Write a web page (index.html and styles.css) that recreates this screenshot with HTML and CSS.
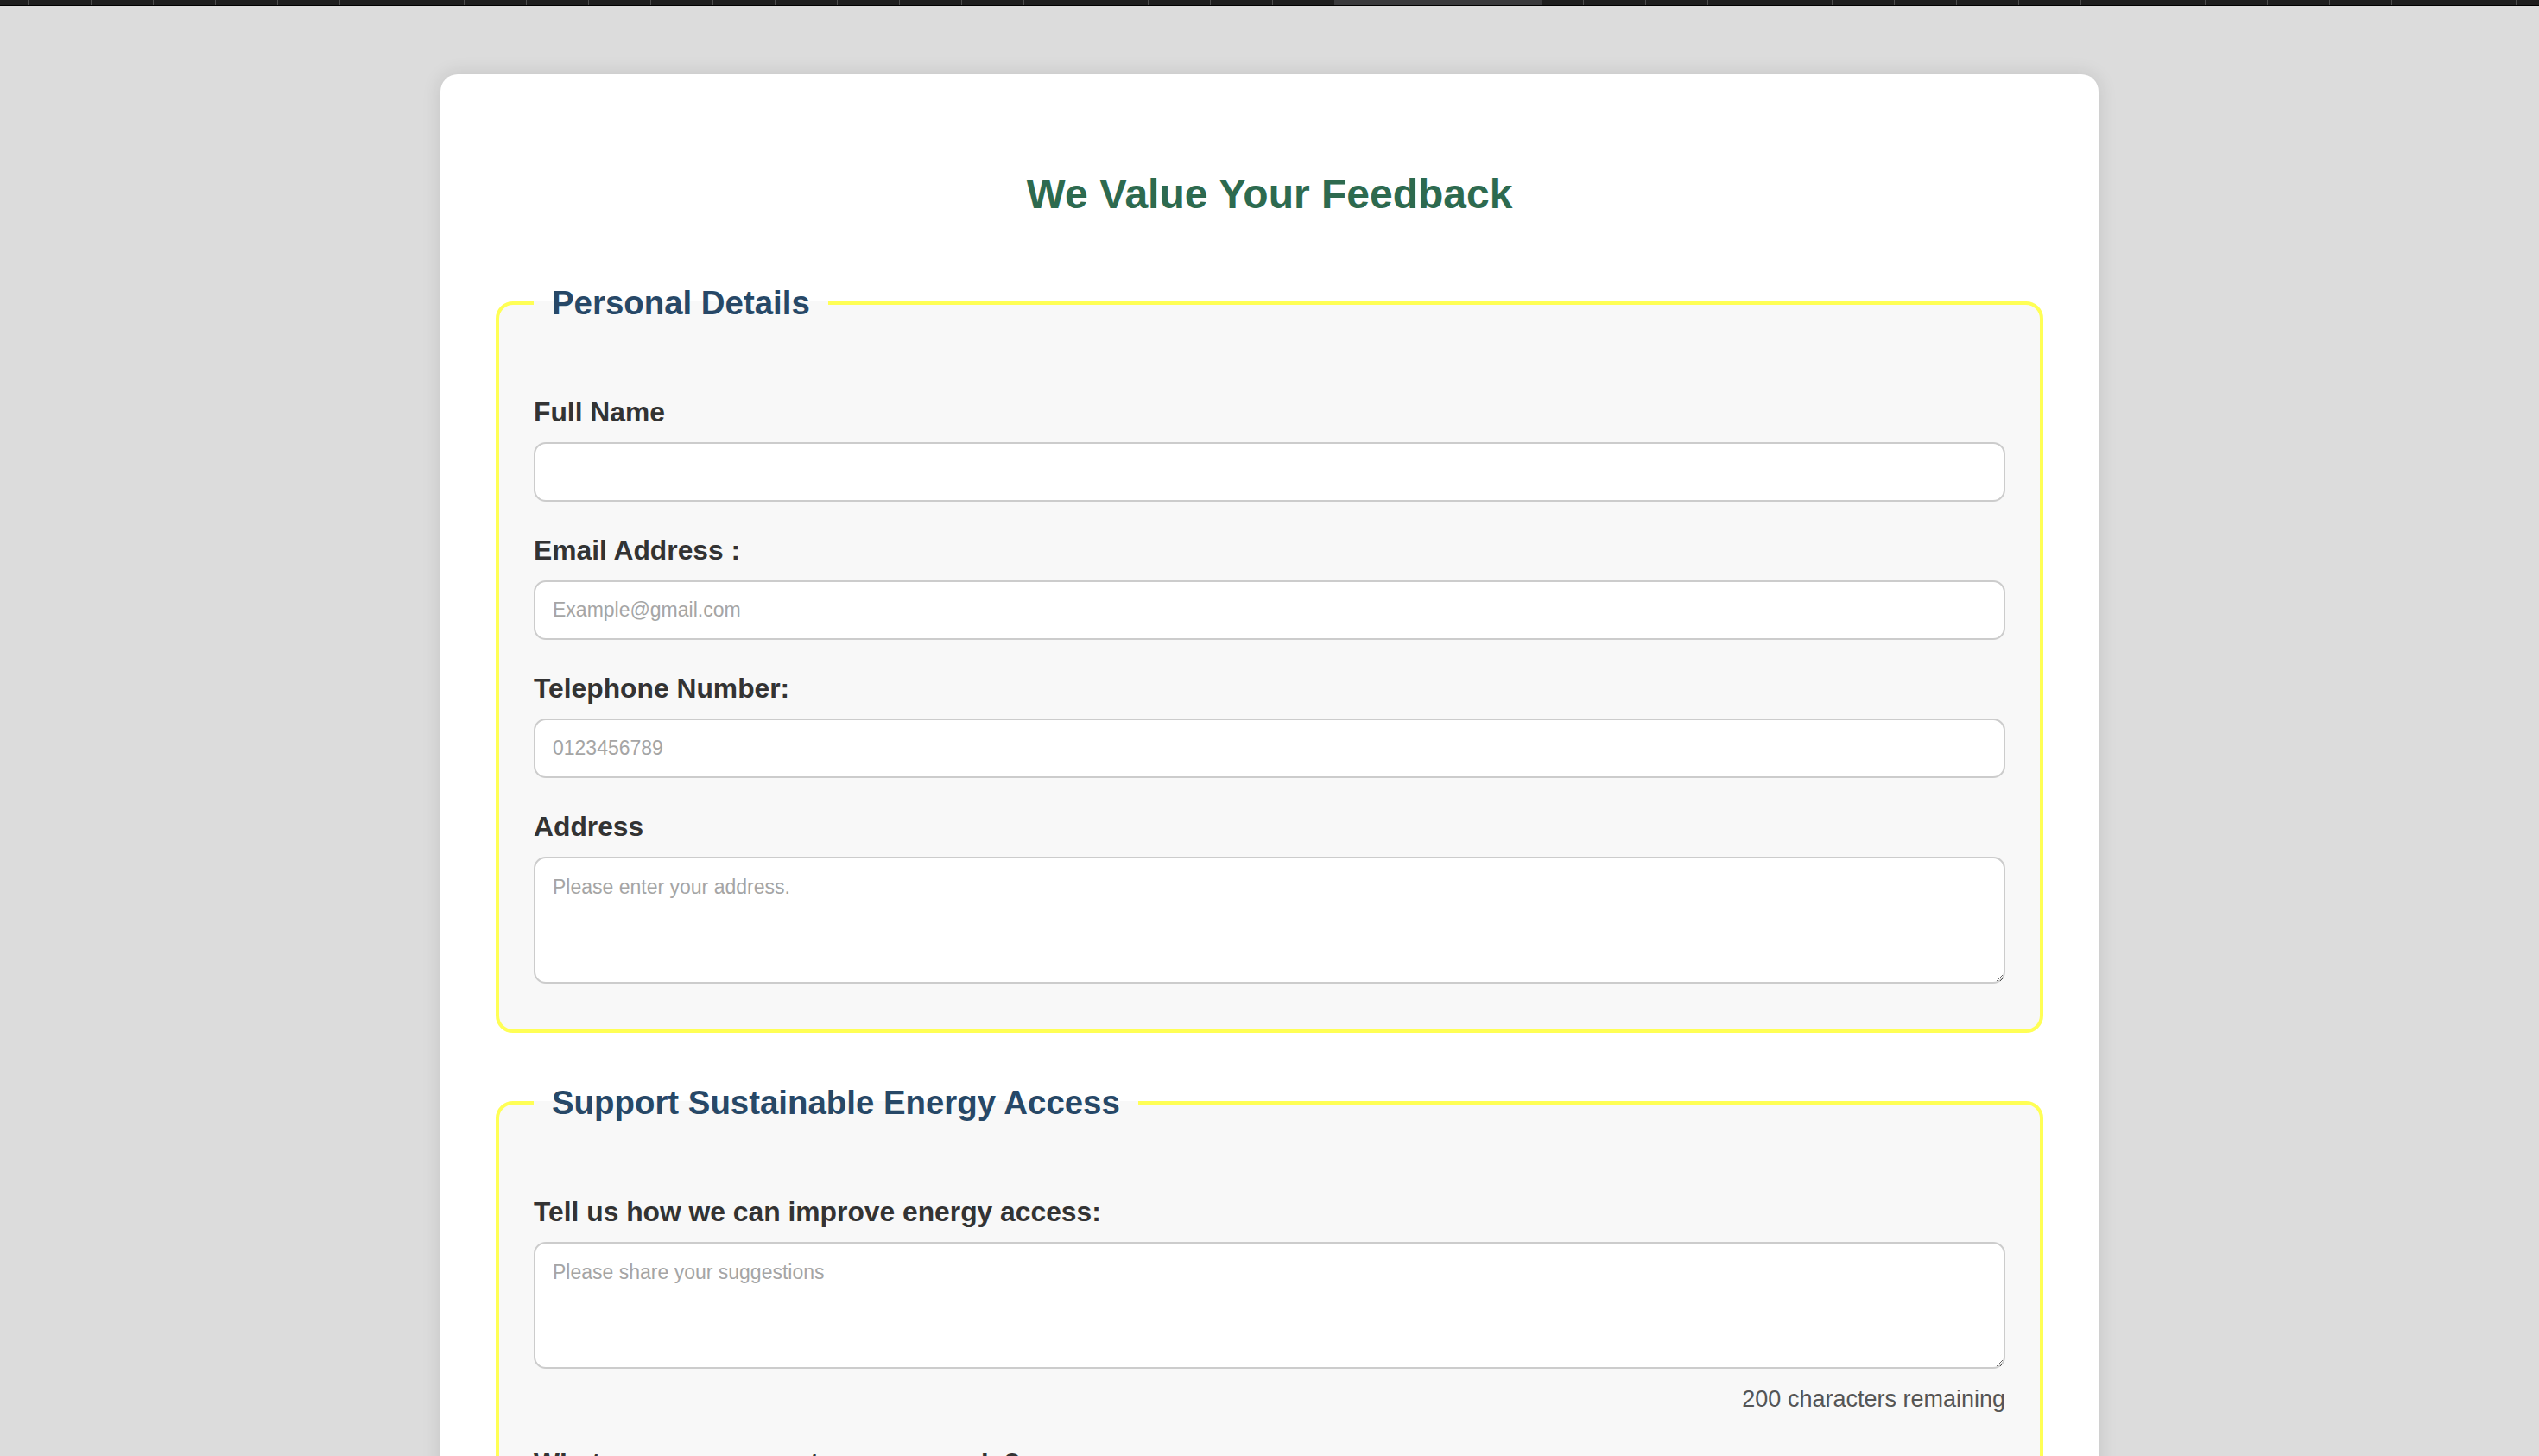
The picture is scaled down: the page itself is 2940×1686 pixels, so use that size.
FILE: index.html
```html
<!DOCTYPE html>
<html lang="en">
<head>
<meta charset="utf-8">
<title>We Value Your Feedback</title>
<link rel="stylesheet" href="styles.css">
</head>
<body>
<div class="topbar"><div class="topbar-tab"></div></div>
<main class="card">
  <h1 class="title">We Value Your Feedback</h1>
  <form class="form">
    <fieldset class="section">
      <legend class="section-title">Personal Details</legend>
      <div class="field">
        <label class="field-label" for="fullname">Full Name</label>
        <input class="field-input" id="fullname" type="text">
      </div>
      <div class="field">
        <label class="field-label" for="email">Email Address :</label>
        <input class="field-input" id="email" type="email" placeholder="Example@gmail.com">
      </div>
      <div class="field">
        <label class="field-label" for="phone">Telephone Number:</label>
        <input class="field-input" id="phone" type="tel" placeholder="0123456789">
      </div>
      <div class="field field-last">
        <label class="field-label" for="address">Address</label>
        <textarea class="field-input field-area" id="address" placeholder="Please enter your address."></textarea>
      </div>
    </fieldset>
    <fieldset class="section section-next">
      <legend class="section-title">Support Sustainable Energy Access</legend>
      <div class="field field-counted">
        <label class="field-label" for="suggest">Tell us how we can improve energy access:</label>
        <textarea class="field-input field-area" id="suggest" placeholder="Please share your suggestions"></textarea>
        <p class="counter">200 characters remaining</p>
      </div>
      <div class="field">
        <label class="field-label" for="needs">What are your current energy needs?</label>
        <input class="field-input" id="needs" type="text">
      </div>
    </fieldset>
  </form>
</main>
</body>
</html>
```
FILE: styles.css
```css
html, body {
  margin: 0;
  padding: 0;
}

body {
  background: #dcdcdc;
  font-family: "Liberation Sans", Arial, Helvetica, sans-serif;
  color: #333333;
  overflow-x: hidden;
}

.topbar {
  height: 6px;
  border-bottom: 1px solid #000000;
  background-color: #1e1e1e;
  background-image: repeating-linear-gradient(90deg, #4c4c4c 0 1px, transparent 1px 72px);
  background-position: 33px 0;
  display: flex;
}

.topbar-tab {
  margin-left: 1545px;
  width: 240px;
  background: #3a3a3c;
}

.card {
  box-sizing: border-box;
  max-width: 1920px;
  margin: 79px auto 0;
  padding: 64px 64px 80px;
  background: #ffffff;
  border-radius: 20px;
  box-shadow: 0 0 22px rgba(0, 0, 0, 0.12);
}

.title {
  margin: 47px 0 0;
  font-size: 48px;
  line-height: 55px;
  font-weight: bold;
  color: #2d6a4f;
  text-align: center;
}

.form {
  margin: 0;
}

.section {
  margin: 77px 0 0;
  min-inline-size: 0;
  padding: 86px 40px 15px;
  border: 4px solid #ffff55;
  border-radius: 20px;
  background: #f8f8f8;
}

.section-next {
  margin-top: 59px;
}

.section-title {
  padding: 0 21px;
  font-size: 38.4px;
  line-height: 44px;
  font-weight: bold;
  color: #274867;
}

.field {
  margin-bottom: 38.5px;
}

.field-label {
  display: block;
  margin-bottom: 17px;
  font-size: 31.8px;
  line-height: 36px;
  font-weight: bold;
  color: #333333;
}

.field-input {
  display: block;
  box-sizing: border-box;
  width: 100%;
  height: 68.5px;
  margin: 0;
  padding: 0 20px;
  border: 2px solid #cccccc;
  border-radius: 14px;
  background: #ffffff;
  font-family: "Liberation Sans", Arial, Helvetica, sans-serif;
  font-size: 23px;
  color: #333333;
  outline: none;
}

.field-area {
  height: 146.5px;
  padding: 20px;
  resize: vertical;
}

.field-input::placeholder {
  color: #a5a5a5;
  opacity: 1;
}

.counter {
  margin: 20px 0 0;
  font-size: 27px;
  line-height: 31px;
  color: #555555;
  text-align: right;
}

.field-counted {
  margin-bottom: 40.5px;
}
```
